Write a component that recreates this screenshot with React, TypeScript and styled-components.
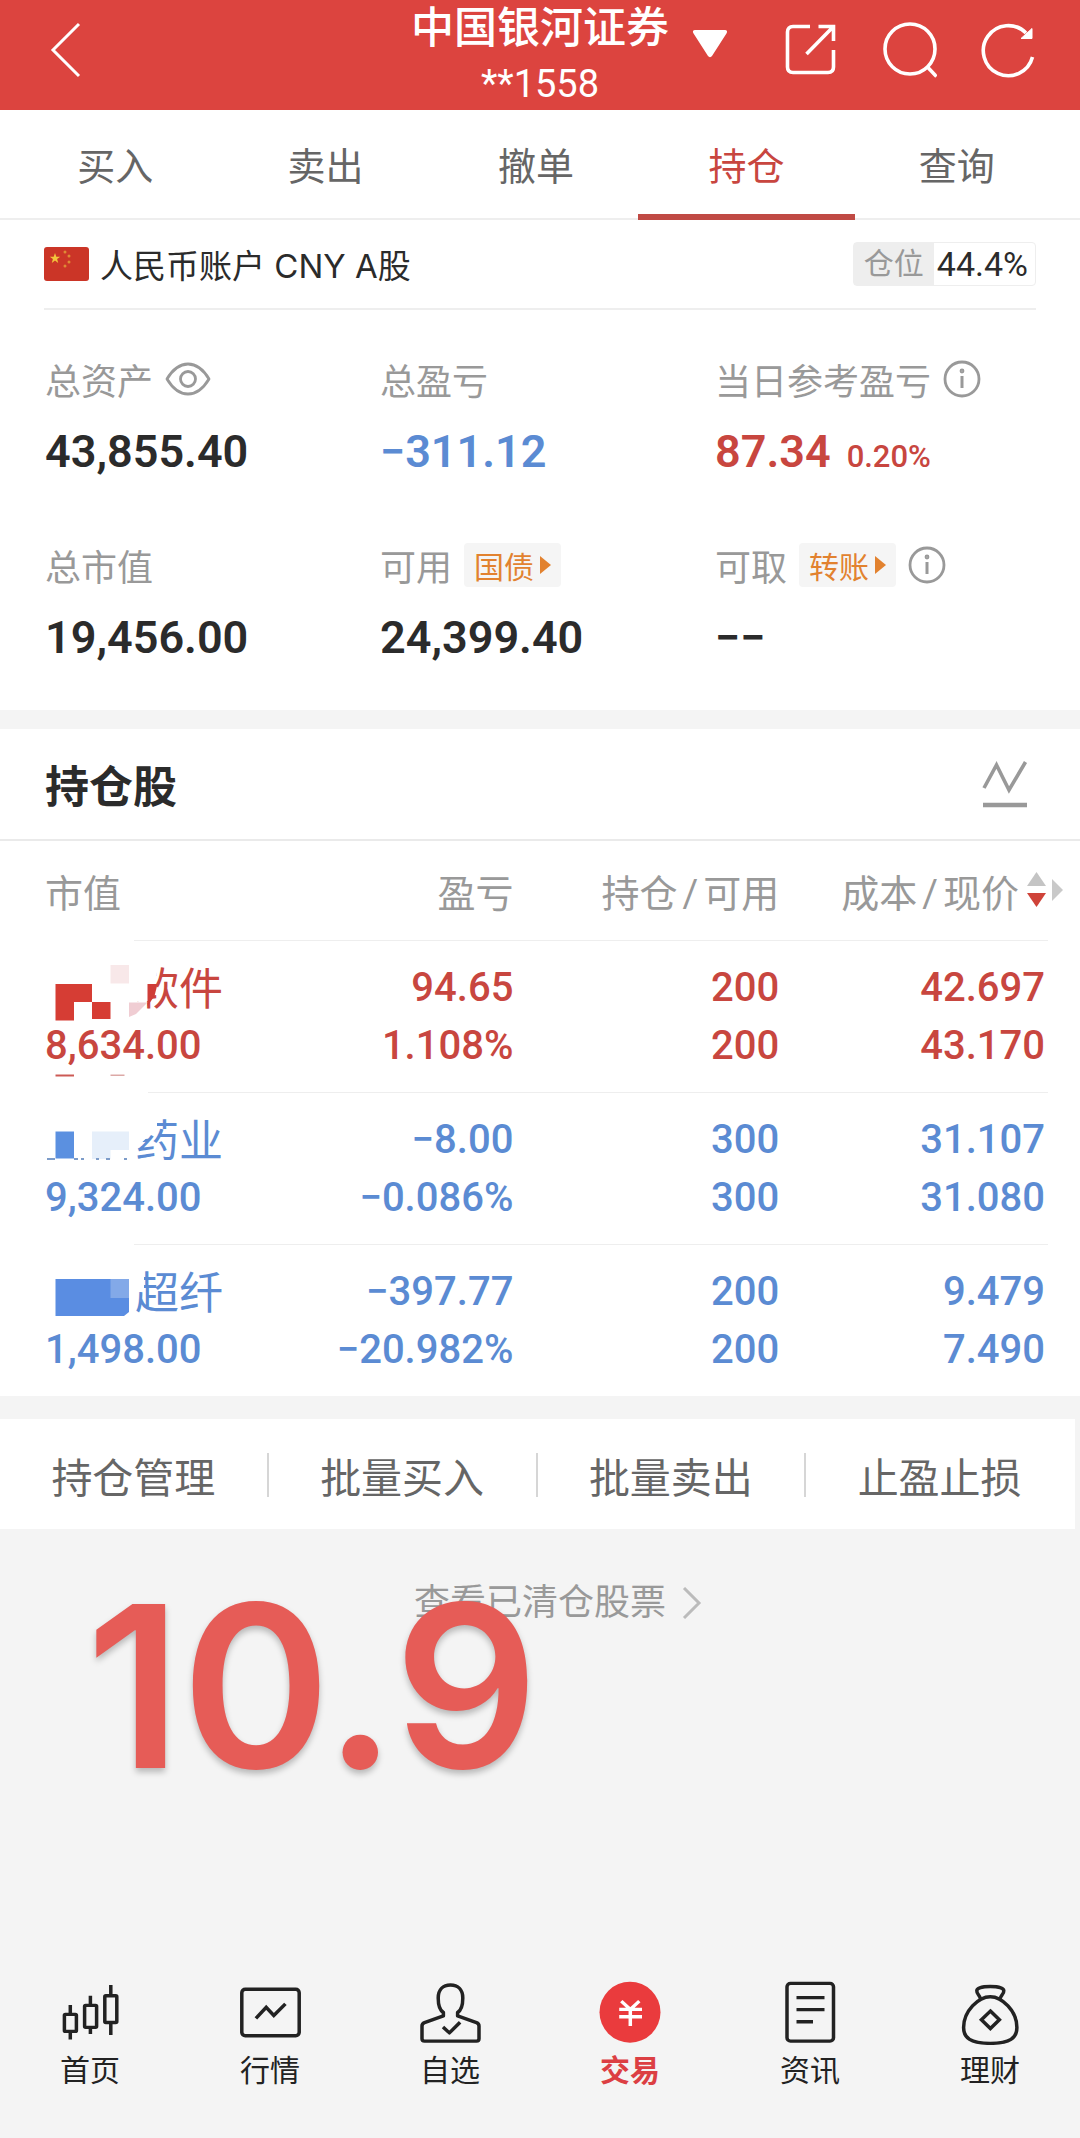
import React from 'react';
import styled, { createGlobalStyle } from 'styled-components';

const RED = '#c8463f';
const BLUE = '#5b8bd3';
const GREY = '#999999';

const GlobalStyle = createGlobalStyle`
  * { box-sizing: border-box; }
  body {
    margin: 0;
    background: #f4f4f4;
    color: #2b2b2b;
    font-family: Roboto, "Noto Sans CJK SC", sans-serif;
  }
  h1, h2, p, dl, dd, dt { margin: 0; font-weight: inherit; }
  button {
    padding: 0;
    border: 0;
    background: none;
    color: inherit;
    font: inherit;
    cursor: pointer;
  }
  a { color: inherit; text-decoration: none; }
  svg { display: block; flex: none; }
`;

const Page = styled.div`
  display: flex;
  flex-direction: column;
  min-height: 100vh;
`;

const Header = styled.header`
  display: grid;
  grid-template-columns: 1fr auto 1fr;
  height: 110px;
  background: #dc443f;
  color: #fff;
`;

const HeaderLeft = styled.div`
  display: flex;
  align-items: center;
  padding: 0 50px 12px;
`;

const HeaderRight = styled.div`
  display: flex;
  align-items: center;
  padding: 0 45px 12px 23px;
`;

const HeaderActions = styled.div`
  display: flex;
  gap: 44px;
  margin-left: auto;
`;

const TitleBlock = styled.div`
  display: flex;
  flex-direction: column;
  align-items: center;
`;

const Title = styled.h1`
  font-size: 43px;
  font-weight: 500;
  line-height: 56px;
`;

const AccountNo = styled.p`
  font-size: 38px;
  line-height: 56px;
`;

const Tabs = styled.nav`
  display: flex;
  height: 110px;
  padding: 0 18px 0 10px;
  background: #fff;
  border-bottom: 2px solid #eeeeee;
`;

const Tab = styled.a<{ $active?: boolean }>`
  position: relative;
  flex: 1;
  text-align: center;
  font-size: 38px;
  line-height: 115px;
  color: ${(p) => (p.$active ? RED : '#666666')};
  &::after {
    content: '';
    display: ${(p) => (p.$active ? 'block' : 'none')};
    position: absolute;
    left: -3px;
    right: -3px;
    bottom: -2px;
    height: 6px;
    background: #c04a44;
  }
`;

const Summary = styled.section`
  padding: 0 44px;
  background: #fff;
`;

const AccountRow = styled.div`
  display: flex;
  align-items: center;
  gap: 11px;
  height: 90px;
  border-bottom: 2px solid #eeeeee;
  font-size: 33px;
`;

const AccountName = styled.span`
  font-family: Inter, "Noto Sans CJK SC", sans-serif;
`;

const Badge = styled.span`
  display: flex;
  margin-left: auto;
  line-height: 42px;
  border: 1px solid #eeeeee;
  border-radius: 4px;
`;

const BadgeLabel = styled.span`
  padding: 0 10px;
  background: #eeeeee;
  color: ${GREY};
  font-size: 30px;
`;

const BadgeValue = styled.span`
  padding: 0 7px 0 3px;
  font-size: 34px;
`;

const Stats = styled.dl`
  display: grid;
  grid-template-columns: 335px 335px 1fr;
  row-gap: 46px;
  padding: 44px 0 35px 1px;
`;

const StatLabel = styled.dt`
  display: flex;
  align-items: center;
  gap: 12px;
  height: 50px;
  font-size: 36px;
  color: ${GREY};
`;

const StatValue = styled.dd<{ $color?: string }>`
  margin-top: 10px;
  font-size: 45px;
  font-weight: 600;
  line-height: 75px;
  color: ${(p) => p.$color ?? '#2b2b2b'};
`;

const Percent = styled.span`
  margin-left: 16px;
  font-size: 31px;
  font-weight: 500;
`;

const Tag = styled.button`
  display: flex;
  align-items: center;
  gap: 6px;
  height: 44px;
  padding: 0 10px;
  background: #f5f5f5;
  border-radius: 4px;
  color: #e2822f;
  font-size: 30px;
`;

const Holdings = styled.section`
  margin-top: 19px;
  background: #fff;
`;

const SectionHead = styled.div`
  display: flex;
  align-items: center;
  justify-content: space-between;
  height: 112px;
  padding: 0 52px 0 45px;
  border-bottom: 2px solid #eaeaea;
`;

const SectionTitle = styled.h2`
  font-size: 44px;
  font-weight: 700;
`;

const TableWrap = styled.div`
  padding: 0 32px 0 45px;
`;

const Table = styled.table`
  width: 100%;
  table-layout: fixed;
  border-collapse: collapse;
`;

const Th = styled.th<{ $width: string; $left?: boolean }>`
  width: ${(p) => p.$width};
  height: 99px;
  padding: 0 ${(p) => (p.$left ? 0 : 3)}px 0 0;
  text-align: ${(p) => (p.$left ? 'left' : 'right')};
  font-size: 38px;
  font-weight: 400;
  white-space: nowrap;
  color: ${GREY};
`;

const Slash = styled.span`
  margin: 0 5px;
`;

const SortHead = styled.div`
  display: flex;
  align-items: center;
  justify-content: flex-end;
  gap: 8px;
  margin-right: -18px;
`;

const Row = styled.tr<{ $color: string }>`
  color: ${(p) => p.$color};
  border-top: 1px solid #eeeeee;
`;

const Td = styled.td<{ $left?: boolean }>`
  padding: 18px ${(p) => (p.$left ? 0 : 3)}px 17px 0;
  text-align: ${(p) => (p.$left ? 'left' : 'right')};
  font-size: 40px;
  font-weight: 500;
  line-height: 58px;
  white-space: nowrap;
`;

const Line = styled.div`
  height: 58px;
`;

const StockName = styled.div`
  position: relative;
  height: 58px;
  padding-left: 90px;
  font-size: 44px;
  font-weight: 400;
  line-height: 62px;
`;

const Mosaic = styled.svg.attrs({ width: 140, height: 150, viewBox: '0 0 140 150' })`
  position: absolute;
  left: -5px;
  top: -23px;
`;

const Actions = styled.div`
  display: grid;
  grid-template-columns: repeat(4, 1fr);
  height: 110px;
  margin: 23px 5px 0 0;
  padding-top: 3px;
  align-items: center;
  background: #fff;
`;

const Action = styled.button`
  height: 44px;
  padding-top: 4px;
  font-size: 41px;
  line-height: 44px;
  color: #666666;
  border-right: 2px solid #d6d6d6;
  &:last-child { border-right-color: transparent; }
`;

const Cleared = styled.div`
  display: flex;
  justify-content: center;
  position: relative;
  padding: 50px 0 0 36px;
`;

const ClearedLink = styled.a`
  display: flex;
  align-items: center;
  gap: 16px;
  font-size: 36px;
  line-height: 48px;
  color: ${GREY};
`;

const DateMark = styled.p`
  position: absolute;
  left: 86px;
  top: 21px;
  font-family: Inter, sans-serif;
  font-size: 226px;
  font-weight: 600;
  line-height: 272px;
  color: #e65c57;
  text-shadow: 0 4px 6px rgba(0, 0, 0, 0.25);
`;

const BottomNav = styled.nav`
  display: grid;
  grid-template-columns: repeat(6, 1fr);
  margin-top: auto;
  padding-bottom: 47px;
`;

const NavItem = styled.a<{ $active?: boolean }>`
  display: flex;
  flex-direction: column;
  align-items: center;
  gap: 6px;
  font-size: 30px;
  line-height: 40px;
  font-weight: ${(p) => (p.$active ? 700 : 400)};
  color: ${(p) => (p.$active ? '#dc3f43' : '#222222')};
`;

const NavGlyph = styled.svg.attrs({
  width: 64,
  height: 66,
  viewBox: '0 0 64 68',
  preserveAspectRatio: 'none',
})`
  fill: none;
  stroke: #222222;
  stroke-width: 3.5;
`;

const InfoIcon = () => (
  <svg width="38" height="38" viewBox="0 0 38 38" fill="none" stroke="#999" strokeWidth="2.8">
    <circle cx="19" cy="19" r="17" />
    <path d="M19 16v12" strokeWidth="3" />
    <circle cx="19" cy="11" r="1" />
  </svg>
);

const EyeIcon = () => (
  <svg width="46" height="34" viewBox="0 0 46 34" fill="none" stroke="#999" strokeWidth="2.8">
    <path d="M2 17C8 7 15 2 23 2s15 5 21 15c-6 10-13 15-21 15S8 27 2 17z" strokeLinejoin="round" />
    <circle cx="23" cy="17" r="7.5" />
  </svg>
);

const TagArrow = () => (
  <svg width="11" height="18" viewBox="0 0 11 18" fill="#e2822f">
    <path d="M0 0l11 9-11 9z" />
  </svg>
);

const FlagIcon = () => (
  <svg width="45" height="34" viewBox="0 0 45 34">
    <rect width="45" height="34" rx="3" fill="#cb3527" />
    <path
      d="M11 6l1.3 3.7h3.9l-3.1 2.4 1.1 3.8-3.2-2.3-3.2 2.3 1.1-3.8-3.1-2.4h3.9z"
      fill="#f3c53c"
    />
    <g fill="#df8a35">
      <circle cx="21" cy="5" r="1.5" />
      <circle cx="25" cy="9" r="1.5" />
      <circle cx="25" cy="15" r="1.5" />
      <circle cx="21" cy="19" r="1.5" />
    </g>
  </svg>
);

const CandlesIcon = () => (
  <NavGlyph>
    <rect x="6.4" y="36.4" width="12" height="17.6" rx="1" />
    <path d="M12.3 26.8v9M12.3 54v8.3" />
    <rect x="26.6" y="27.2" width="12" height="22.6" rx="1" />
    <path d="M32.4 17.2v9M32.4 50v6.6" />
    <rect x="46.8" y="17.2" width="12" height="27.6" rx="1" />
    <path d="M52.8 6.2v10M52.8 46v11.8" />
  </NavGlyph>
);

const MarketIcon = () => (
  <NavGlyph>
    <rect x="3.8" y="10.6" width="57.4" height="47.8" rx="3.5" />
    <path d="M17.9 40.6l10.3-11.5 7.6 8.5 11.6-12" />
  </NavGlyph>
);

const PersonIcon = () => (
  <NavGlyph strokeLinejoin="round">
    <path d="M25.4 34.5C21.5 32 20.2 27.5 20.2 19.5C20.2 11 25 6.2 32.5 6.2S44.8 11 44.8 19.5c0 8-1.3 12.5-5.2 15v3.5L58.5 45c1.5.6 2.5 2 2.5 3.5v13c0 1.6-.9 2.5-2.5 2.5h-52C4.9 64 4 63.1 4 61.5v-13C4 47 5 45.6 6.5 45l18.9-7z" />
    <path d="M25 49.5l6.4 6 10.7-11" />
  </NavGlyph>
);

const TradeIcon = () => (
  <NavGlyph>
    <ellipse cx="32" cy="34.2" rx="30.5" ry="31.4" fill="#ea3b3d" stroke="none" />
    <path stroke="#fff" d="M23.3 22.8l9 8.5 9-8.5M21.2 31.3h22.8M21.2 38.9h22.8M32.3 31v17.5" />
  </NavGlyph>
);

const NewsIcon = () => (
  <NavGlyph>
    <rect x="9" y="4.5" width="46.5" height="59.5" rx="3.5" />
    <path d="M18.5 19.2h28M18.5 31.6h28M18.5 44h16.5" />
  </NavGlyph>
);

const WealthIcon = () => (
  <NavGlyph strokeLinejoin="round">
    <path d="M32.3 18.3C44 18.3 58.9 33 58.9 50c0 11-7 16.3-26.6 16.3S5.6 61 5.6 50C5.6 33 20.5 18.3 32.3 18.3z" />
    <path d="M22.5 20.5c-.4-3.5-4-5-3.7-8.5.3-2.6 5-4.3 13.5-4.3S45.5 9.4 45.8 12c.3 3.5-3.3 5-3.7 8.5" />
    <path d="M32.4 33l9 9-9 9-9-9z" strokeLinejoin="miter" />
  </NavGlyph>
);

/* Each mosaic is drawn in a box that starts 5px left of and 23px above the name line. */
const SoftwareMosaic = () => (
  <Mosaic>
    <path d="M0 0h94v12H0zM94 15h23v20l-6 30H94z" fill="#fff" />
    <path d="M15.5 48H52v18h18.5V83H52V66H34V84.5H15.5z" fill="#d63d34" />
    <path d="M70.5 29h18.5V47.5H70.5z" fill="#f8e8e9" />
    <path d="M107.5 48h10l-3 12-7 10z" fill="#cf3d38" />
    <path d="M89 66.5h18.5L96 78l-7 3z" fill="#f0cdd3" />
    <path d="M15.5 138.5h18.5v2H15.5z" fill="#cc5a55" />
    <path d="M70.5 138.5h14v1.5h-14z" fill="#dca9a6" />
  </Mosaic>
);

const PharmaMosaic = () => (
  <Mosaic>
    <path d="M0 0h108v12H0zM92 18h25v22l-24 23z" fill="#fff" />
    <path d="M15.5 43.5h18.5v27H15.5z" fill="#5b90e0" />
    <path d="M52 43.5h37v18.5H70.5v9H52z" fill="#e6effa" />
    <path d="M7 71h8M34 71h4M41 71h3M56 71h3M66 71h4M84 71h3" stroke="#7d9cc9" strokeWidth="2" />
  </Mosaic>
);

const FiberMosaic = () => (
  <Mosaic>
    <path d="M0 0h94v12H0zM90 18h14v30H90z" fill="#fff" />
    <path d="M15.5 39H89v33l-5 4H15.5z" fill="#5a8de2" />
    <path d="M70.5 39H89v19H70.5z" fill="#83a9e8" />
  </Mosaic>
);

const holdings = [
  {
    name: '软件', mosaic: <SoftwareMosaic />, color: RED, value: '8,634.00',
    profit: '94.65', rate: '1.108%', held: '200', usable: '200', cost: '42.697', price: '43.170',
  },
  {
    name: '药业', mosaic: <PharmaMosaic />, color: BLUE, value: '9,324.00',
    profit: '−8.00', rate: '−0.086%', held: '300', usable: '300', cost: '31.107', price: '31.080',
  },
  {
    name: '超纤', mosaic: <FiberMosaic />, color: BLUE, value: '1,498.00',
    profit: '−397.77', rate: '−20.982%', held: '200', usable: '200', cost: '9.479', price: '7.490',
  },
];

const tabs = ['买入', '卖出', '撤单', '持仓', '查询'];
const actions = ['持仓管理', '批量买入', '批量卖出', '止盈止损'];
const navItems = [
  { label: '首页', icon: <CandlesIcon /> },
  { label: '行情', icon: <MarketIcon /> },
  { label: '自选', icon: <PersonIcon /> },
  { label: '交易', icon: <TradeIcon />, active: true },
  { label: '资讯', icon: <NewsIcon /> },
  { label: '理财', icon: <WealthIcon /> },
];

export default function App() {
  return (
    <Page>
      <GlobalStyle />
      <Header>
        <HeaderLeft>
          <button aria-label="返回">
            <svg width="32" height="56" viewBox="0 0 32 56" fill="none" stroke="#fff" strokeWidth="3">
              <path d="M29 2L3 28l26 26" />
            </svg>
          </button>
        </HeaderLeft>
        <TitleBlock>
          <Title>中国银河证券</Title>
          <AccountNo>**1558</AccountNo>
        </TitleBlock>
        <HeaderRight>
          <button aria-label="切换账户">
            <svg width="36" height="40" viewBox="0 0 36 40" fill="#fff">
              <path d="M3 0h30c2 0 2.6 1.8 1.6 3.2L20 26c-1 1.5-3 1.5-4 0L1.4 3.2C.4 1.8 1 0 3 0z" />
            </svg>
          </button>
          <HeaderActions>
            <button aria-label="分享">
              <svg width="52" height="54" viewBox="1 0 52 54" fill="none" stroke="#fff" strokeWidth="3.6">
                <path d="M26 3.500H9c-3.500 0-5.500 2-5.500 5.500v35c0 3.500 2 5.500 5.500 5.500h35c3.500 0 5.500-2 5.500-5.500V27" />
                <path d="M34.500 3.500h15V18M49 4L22.500 31" />
              </svg>
            </button>
            <button aria-label="搜索">
              <svg width="56" height="56" viewBox="-3 1 56 56" fill="none" stroke="#fff" strokeWidth="3.6">
                <circle cx="26" cy="28" r="25" />
                <path d="M43 45.500l9.500 10" />
              </svg>
            </button>
            <button aria-label="刷新">
              <svg width="54" height="56" viewBox="0 0 54 56" fill="none" stroke="#fff" strokeWidth="3.6">
                <path d="M51.500 35A25 25 0 1 1 45 11" />
                <path d="M51 6.500v10H40z" fill="#fff" strokeWidth="1" />
              </svg>
            </button>
          </HeaderActions>
        </HeaderRight>
      </Header>

      <Tabs>
        {tabs.map((t) => (
          <Tab key={t} href="#" $active={t === '持仓'}>{t}</Tab>
        ))}
      </Tabs>

      <Summary>
        <AccountRow>
          <FlagIcon />
          <AccountName>人民币账户 CNY A股</AccountName>
          <Badge>
            <BadgeLabel>仓位</BadgeLabel>
            <BadgeValue>44.4%</BadgeValue>
          </Badge>
        </AccountRow>
        <Stats>
          <div>
            <StatLabel>总资产<EyeIcon /></StatLabel>
            <StatValue>43,855.40</StatValue>
          </div>
          <div>
            <StatLabel>总盈亏</StatLabel>
            <StatValue $color={BLUE}>−311.12</StatValue>
          </div>
          <div>
            <StatLabel>当日参考盈亏<InfoIcon /></StatLabel>
            <StatValue $color={RED}>87.34<Percent>0.20%</Percent></StatValue>
          </div>
          <div>
            <StatLabel>总市值</StatLabel>
            <StatValue>19,456.00</StatValue>
          </div>
          <div>
            <StatLabel>可用<Tag>国债<TagArrow /></Tag></StatLabel>
            <StatValue>24,399.40</StatValue>
          </div>
          <div>
            <StatLabel>可取<Tag>转账<TagArrow /></Tag><InfoIcon /></StatLabel>
            <StatValue>−−</StatValue>
          </div>
        </Stats>
      </Summary>

      <Holdings>
        <SectionHead>
          <SectionTitle>持仓股</SectionTitle>
          <button aria-label="走势">
            <svg width="46" height="48" viewBox="0 0 46 48" fill="none" stroke="#999" strokeWidth="3.6">
              <path d="M2 28L14.5 5 27 30 43.5 2" />
              <path d="M1 45h44" strokeWidth="4.4" />
            </svg>
          </button>
        </SectionHead>
        <TableWrap>
          <Table>
            <thead>
              <tr>
                <Th $width="20%" $left>市值</Th>
                <Th $width="27%">盈亏</Th>
                <Th $width="26.5%">持仓<Slash>/</Slash>可用</Th>
                <Th $width="26.5%">
                  <SortHead>
                    <span>成本<Slash>/</Slash>现价</span>
                    <svg width="36" height="38" viewBox="0 0 36 38">
                      <path d="M9.5 1L19 15H0z" fill="#c4c4c4" />
                      <path d="M0 22h19L9.5 36z" fill="#cf4339" />
                      <path d="M25 8l11 11-11 11z" fill="#c9c9c9" />
                    </svg>
                  </SortHead>
                </Th>
              </tr>
            </thead>
            <tbody>
              {holdings.map((h) => (
                <Row key={h.name} $color={h.color}>
                  <Td $left>
                    <StockName>{h.name}{h.mosaic}</StockName>
                    <Line>{h.value}</Line>
                  </Td>
                  <Td><Line>{h.profit}</Line><Line>{h.rate}</Line></Td>
                  <Td><Line>{h.held}</Line><Line>{h.usable}</Line></Td>
                  <Td><Line>{h.cost}</Line><Line>{h.price}</Line></Td>
                </Row>
              ))}
            </tbody>
          </Table>
        </TableWrap>
      </Holdings>

      <Actions>
        {actions.map((a) => <Action key={a}>{a}</Action>)}
      </Actions>

      <Cleared>
        <ClearedLink href="#">
          查看已清仓股票
          <svg width="20" height="32" viewBox="0 0 20 32" fill="none" stroke="#bbb" strokeWidth="3">
            <path d="M2 1l15 15L2 31" />
          </svg>
        </ClearedLink>
        <DateMark>10.9</DateMark>
      </Cleared>

      <BottomNav>
        {navItems.map((n) => (
          <NavItem key={n.label} href="#" $active={n.active}>
            {n.icon}
            {n.label}
          </NavItem>
        ))}
      </BottomNav>
    </Page>
  );
}
